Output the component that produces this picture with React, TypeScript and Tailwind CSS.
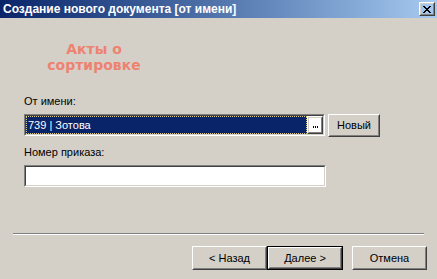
import React from "react";

function RaisedButton({
  children,
  isDefault = false,
  className = "",
}: {
  children: React.ReactNode;
  isDefault?: boolean;
  className?: string;
}) {
  const inner = (
    <div className="h-full w-full border border-t-white border-l-white border-b-[#404040] border-r-[#404040]">
      <div className="h-full w-full border border-t-[#d4d0c8] border-l-[#d4d0c8] border-b-[#808080] border-r-[#808080] flex items-center justify-center text-black">
        {children}
      </div>
    </div>
  );
  if (isDefault) {
    return (
      <div className={`border border-black ${className}`}>
        {inner}
      </div>
    );
  }
  return <div className={className}>{inner}</div>;
}

function Sunken({ children, className = "" }: { children: React.ReactNode; className?: string }) {
  return (
    <div className={`border border-t-[#808080] border-l-[#808080] border-b-white border-r-white ${className}`}>
      <div className="h-full w-full border border-t-[#404040] border-l-[#404040] border-b-[#d4d0c8] border-r-[#d4d0c8]">
        {children}
      </div>
    </div>
  );
}

export default function App() {
  return (
    <div className="w-[437px] h-[279px] bg-[#d4d0c8] flex flex-col font-['Liberation_Sans',Arial,sans-serif] text-[11px] text-black overflow-hidden select-none">
      {/* Title bar */}
      <div className="h-[18px] flex items-center justify-between pl-[3px] pr-[2px] bg-gradient-to-r from-[#0a246a] to-[#a6caf0]">
        <span className="text-white font-bold text-[12px] leading-[18px] whitespace-nowrap">
          Создание нового документа [от имени]
        </span>
        <RaisedButton className="w-[16px] h-[14px]">
          <svg width="8" height="7" viewBox="0 0 8 7" shapeRendering="crispEdges">
            <path d="M0 0h2v1h-2zM6 0h2v1h-2zM1 1h2v1h-2zM5 1h2v1h-2zM2 2h4v1h-4zM3 3h2v1h-2zM2 4h4v1h-4zM1 5h2v1h-2zM5 5h2v1h-2zM0 6h2v1h-2zM6 6h2v1h-2z" fill="#000" />
          </svg>
        </RaisedButton>
      </div>

      {/* Body */}
      <div className="flex-1 flex flex-col">
        <div className="ml-[24px] w-[140px] mt-[23px] text-center font-['DejaVu_Sans',Verdana,sans-serif] font-bold text-[14px] leading-[16px] text-[#ee8270]">
          <div>Акты о</div>
          <div>сортировке</div>
        </div>

        <div className="ml-[24px] mt-[22px] leading-[13px]">От имени:</div>

        <div className="ml-[24px] mt-[6px] flex items-start gap-[3px]">
          <Sunken className="w-[301px] h-[22px] bg-white">
            <div className="h-full flex bg-white">
              <div className="flex-1 bg-[#0a246a] border border-dotted border-[#d8c88a] text-white leading-[16px] pl-[1px]">
                739 | Зотова
              </div>
              <RaisedButton className="w-[16px] h-full">
                <svg width="5" height="2" viewBox="0 0 5 2" shapeRendering="crispEdges" className="mt-[4px]">
                  <path d="M0 0h1v2h-1zM2 0h1v2h-1zM4 0h1v2h-1z" fill="#000" />
                </svg>
              </RaisedButton>
            </div>
          </Sunken>
          <RaisedButton className="w-[52px] h-[23px]">
            <span className="leading-[13px]">Новый</span>
          </RaisedButton>
        </div>

        <div className="ml-[24px] mt-[9px] leading-[13px]">Номер приказа:</div>

        <Sunken className="ml-[24px] mt-[6px] w-[302px] h-[22px] bg-white">
          <div className="h-full w-full bg-white" />
        </Sunken>

        <div className="mx-[13px] mt-[46px] h-[2px] border-t border-t-[#808080] border-b border-b-white" />

        <div className="mt-[11px] flex justify-end pr-[10px]">
          <RaisedButton className="w-[75px] h-[24px]">&lt; Назад</RaisedButton>
          <RaisedButton isDefault className="w-[76px] h-[24px]">Далее &gt;</RaisedButton>
          <RaisedButton className="w-[75px] h-[24px] ml-[9px]">Отмена</RaisedButton>
        </div>
      </div>
    </div>
  );
}
